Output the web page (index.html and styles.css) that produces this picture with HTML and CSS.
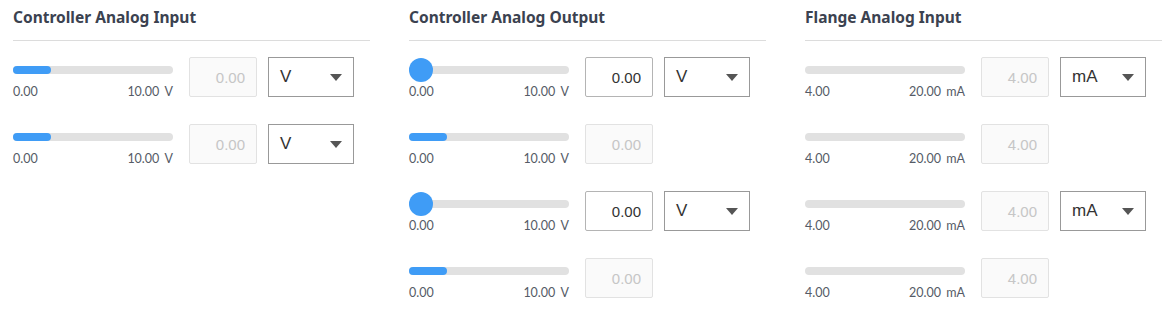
FILE: index.html
```html
<!DOCTYPE html>
<html lang="en">
<head>
    <meta charset="UTF-8">
    <title>Analog IO</title>
    <link rel="stylesheet" href="styles.css">
</head>
<body>
    <div class="io-panel">
        <!-- 制御盤 アナログ入力 -->
        <section class="io-column">
            <h2 class="io-title">Controller Analog Input</h2>
            <div class="io-row">
                <div class="slider">
                    <div class="track"><div class="fill" style="width: 38px"></div></div>
                    <div class="range"><span>0.00</span><span>10.00 <span class="unit">V</span></span></div>
                </div>
                <input class="value" type="text" value="0.00" disabled>
                <div class="unit-select"><span>V</span><svg width="12" height="7" viewBox="0 0 12 7"><path d="M0 0h12L6 7z" fill="#555"/></svg></div>
            </div>
            <div class="io-row">
                <div class="slider">
                    <div class="track"><div class="fill" style="width: 38px"></div></div>
                    <div class="range"><span>0.00</span><span>10.00 <span class="unit">V</span></span></div>
                </div>
                <input class="value" type="text" value="0.00" disabled>
                <div class="unit-select"><span>V</span><svg width="12" height="7" viewBox="0 0 12 7"><path d="M0 0h12L6 7z" fill="#555"/></svg></div>
            </div>
        </section>

        <!-- 制御盤 アナログ出力 -->
        <section class="io-column">
            <h2 class="io-title">Controller Analog Output</h2>
            <div class="io-row">
                <div class="slider">
                    <div class="track"><div class="thumb"></div></div>
                    <div class="range"><span>0.00</span><span>10.00 <span class="unit">V</span></span></div>
                </div>
                <input class="value" type="text" value="0.00">
                <div class="unit-select"><span>V</span><svg width="12" height="7" viewBox="0 0 12 7"><path d="M0 0h12L6 7z" fill="#555"/></svg></div>
            </div>
            <div class="io-row">
                <div class="slider">
                    <div class="track"><div class="fill" style="width: 38px"></div></div>
                    <div class="range"><span>0.00</span><span>10.00 <span class="unit">V</span></span></div>
                </div>
                <input class="value" type="text" value="0.00" disabled>
            </div>
            <div class="io-row">
                <div class="slider">
                    <div class="track"><div class="thumb"></div></div>
                    <div class="range"><span>0.00</span><span>10.00 <span class="unit">V</span></span></div>
                </div>
                <input class="value" type="text" value="0.00">
                <div class="unit-select"><span>V</span><svg width="12" height="7" viewBox="0 0 12 7"><path d="M0 0h12L6 7z" fill="#555"/></svg></div>
            </div>
            <div class="io-row">
                <div class="slider">
                    <div class="track"><div class="fill" style="width: 38px"></div></div>
                    <div class="range"><span>0.00</span><span>10.00 <span class="unit">V</span></span></div>
                </div>
                <input class="value" type="text" value="0.00" disabled>
            </div>
        </section>

        <!-- フランジ アナログ入力 -->
        <section class="io-column">
            <h2 class="io-title">Flange Analog Input</h2>
            <div class="io-row">
                <div class="slider">
                    <div class="track"></div>
                    <div class="range"><span>4.00</span><span>20.00 <span class="unit">mA</span></span></div>
                </div>
                <input class="value" type="text" value="4.00" disabled>
                <div class="unit-select"><span>mA</span><svg width="12" height="7" viewBox="0 0 12 7"><path d="M0 0h12L6 7z" fill="#555"/></svg></div>
            </div>
            <div class="io-row">
                <div class="slider">
                    <div class="track"></div>
                    <div class="range"><span>4.00</span><span>20.00 <span class="unit">mA</span></span></div>
                </div>
                <input class="value" type="text" value="4.00" disabled>
            </div>
            <div class="io-row">
                <div class="slider">
                    <div class="track"></div>
                    <div class="range"><span>4.00</span><span>20.00 <span class="unit">mA</span></span></div>
                </div>
                <input class="value" type="text" value="4.00" disabled>
                <div class="unit-select"><span>mA</span><svg width="12" height="7" viewBox="0 0 12 7"><path d="M0 0h12L6 7z" fill="#555"/></svg></div>
            </div>
            <div class="io-row">
                <div class="slider">
                    <div class="track"></div>
                    <div class="range"><span>4.00</span><span>20.00 <span class="unit">mA</span></span></div>
                </div>
                <input class="value" type="text" value="4.00" disabled>
            </div>
        </section>
    </div>
</body>
</html>
```

FILE: styles.css
```css
body {
    margin: 0;
    font-family: 'Lato', 'Noto Sans', sans-serif;
    background-color: #fff;
}
.io-panel {
    display: flex;
    gap: 39px;
    padding: 7px 0 0 13px;
}
.io-column {
    width: 357px;
    flex: none;
}
.io-title {
    margin: 0 0 16px;
    padding-bottom: 13px;
    border-bottom: 1px solid #dcdcdc;
    font-family: 'Noto Sans', sans-serif;
    font-size: 15.5px;
    line-height: 20px;
    font-weight: 700;
    color: #3b4250;
}
.io-row {
    display: flex;
    align-items: flex-start;
    height: 40px;
    margin-bottom: 27px;
}
.slider {
    width: 160px;
    flex: none;
    padding-top: 9px;
}
.track {
    position: relative;
    height: 8px;
    border-radius: 4px;
    background-color: #e1e1e1;
}
.fill {
    height: 8px;
    border-radius: 4px;
    background-color: #3f9cf6;
}
.thumb {
    position: absolute;
    left: 0;
    top: -8px;
    width: 24px;
    height: 24px;
    border-radius: 50%;
    background-color: #3f9cf6;
}
.range {
    display: flex;
    justify-content: space-between;
    margin-top: 10px;
    font-size: 12.5px;
    line-height: 16px;
    color: #555b66;
}
.unit { margin-left: 2px; }
.value {
    width: 68px;
    height: 40px;
    margin-left: 16px;
    padding: 0 11px 0 0;
    box-sizing: border-box;
    border: 1px solid #b4b4b4;
    border-radius: 2px;
    background-color: #fff;
    font-family: 'Liberation Sans', Arial, sans-serif;
    font-size: 15px;
    text-align: right;
    color: #333;
    outline: none;
}
.value:disabled {
    border-color: #e2e2e2;
    background-color: #fafafa;
    color: #c6c6c6;
}
.unit-select {
    display: flex;
    align-items: center;
    justify-content: space-between;
    width: 86px;
    height: 40px;
    margin-left: 11px;
    padding: 0 11px 0 11px;
    box-sizing: border-box;
    border: 1px solid #999;
    font-family: 'Liberation Sans', Arial, sans-serif;
    font-size: 17px;
    color: #333;
}
.unit-select svg { margin-top: 1px; }
```
